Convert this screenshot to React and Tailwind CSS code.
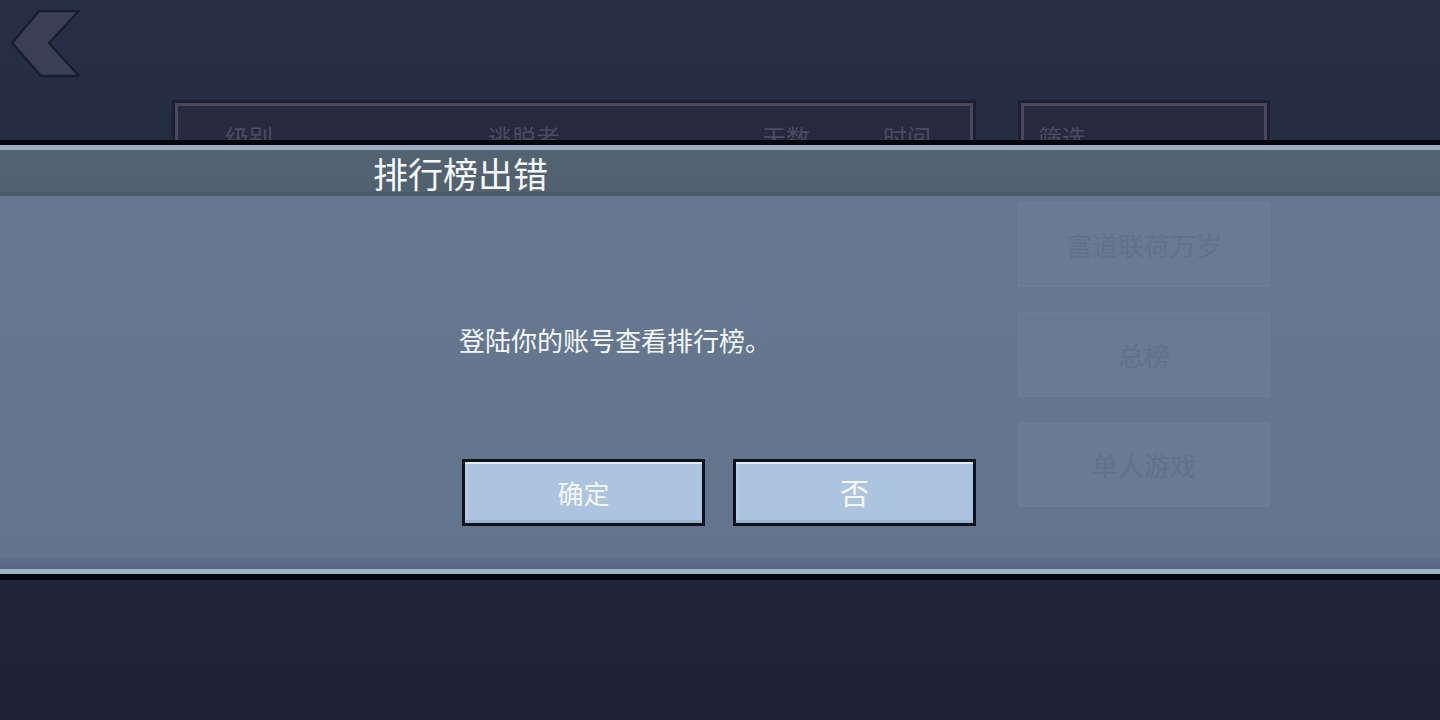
import React from "react";

const cjk = { fontFamily: '"Noto Sans CJK SC", "Noto Sans", sans-serif' };

function BackArrow() {
  return (
    <svg width="74" height="70" viewBox="0 0 74 70" className="block">
      <polygon
        points="30,1 70,1 40,33 70,66 32,66 3,33"
        fill="#3a3e57"
        stroke="#1a1d2e"
        strokeWidth="2.5"
        strokeLinejoin="round"
      />
    </svg>
  );
}

function Panel({ className, children }) {
  return (
    <div className={`border-[3px] border-[#1f1f33] ${className}`}>
      <div className="h-full border-[3px] border-[#4b4761] bg-[#28283f]">{children}</div>
    </div>
  );
}

function GhostButton({ label }) {
  return (
    <div className="relative z-20 flex h-[85px] items-center justify-center border-2 border-[#6a7c96] bg-[#687a94] text-[26px] leading-none text-[#60718a]">
      {label}
    </div>
  );
}

function DialogButton({ label, size }) {
  return (
    <button
      className={`flex h-[67px] w-[243px] items-center justify-center border-[3px] border-[#0d121c] bg-[#adc4de] text-[#f4f7fb] leading-none shadow-[inset_0_2px_0_#e2edf6,inset_0_-3px_0_#9bb2cc,inset_3px_0_0_#b8cde3] ${size}`}
    >
      {label}
    </button>
  );
}

export default function App() {
  return (
    <div
      className="relative h-[720px] w-[1440px] overflow-hidden bg-gradient-to-b from-[#262f46] via-[#222940] to-[#1e2236]"
      style={cjk}
    >
      {/* back button */}
      <div className="h-[100px] pl-[9px] pt-[10px]">
        <BackArrow />
      </div>

      {/* leaderboard page behind the dialog */}
      <div className="flex gap-[42px] pl-[172px]">
        <Panel className="h-[460px] w-[804px]">
          <div className="flex pl-[47px] pt-[19px] text-[24px] leading-[24px] text-[#4d4a63]">
            <span className="w-[263px]">级别</span>
            <span className="w-[274px]">逃脱者</span>
            <span className="w-[121px]">天数</span>
            <span>时间</span>
          </div>
        </Panel>

        <div className="flex w-[252px] flex-col">
          <Panel className="h-[90px]">
            <div className="pl-[14px] pt-[19px] text-[24px] leading-[24px] text-[#4d4a63]">筛选</div>
          </Panel>
          <div className="mt-[12px] flex flex-col gap-[25px]">
            <GhostButton label="富道联荷万岁" />
            <GhostButton label="总榜" />
            <GhostButton label="单人游戏" />
          </div>
        </div>
      </div>

      {/* error dialog */}
      <div className="absolute inset-x-0 top-[140px] z-10 flex h-[440px] flex-col">
        <div className="h-[5px] bg-[#05070d]" />
        <div className="h-[5px] bg-[#9cadc4]" />
        <div className="flex h-[42px] items-center bg-gradient-to-b from-[#536371] to-[#51616f] pl-[373px]">
          <h1 className="mt-[2px] text-[35px] font-normal leading-none text-[#f6f8fa]">排行榜出错</h1>
        </div>
        <div className="h-[4px] bg-[#4a5a6b]" />
        <div className="flex flex-1 flex-col bg-gradient-to-b from-[#66788f] to-[#63758e] pl-[459px]">
          <p className="mt-[131px] text-[26px] leading-[26px] text-[#f4f7fa]">登陆你的账号查看排行榜。</p>
          <div className="mt-[106px] flex gap-[28px] pl-[3px]">
            <DialogButton label="确定" size="text-[26px]" />
            <DialogButton label="否" size="text-[29px]" />
          </div>
        </div>
        <div className="h-[12px] bg-gradient-to-b from-[#5f7189] to-[#55667f]" />
        <div className="h-[5px] bg-[#a0b1c6]" />
        <div className="h-[6px] bg-[#04060b]" />
      </div>
    </div>
  );
}
